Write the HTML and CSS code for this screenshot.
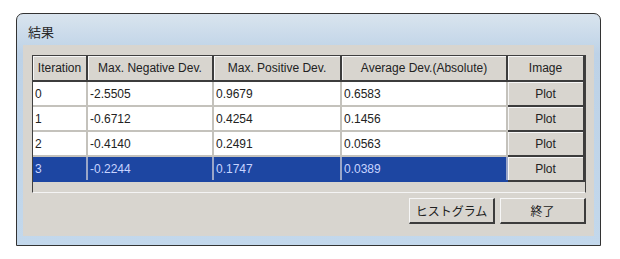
FILE: index.html
```html
<html>

<head>
    <link rel="stylesheet" href="styles.css">
</head>

<body>
    <div class="window">
        <div class="titlebar"><span class="title">結果</span></div>
        <div class="client">
            <div class="listview">
                <table>
                    <colgroup>
                        <col class="c1">
                        <col class="c2">
                        <col class="c3">
                        <col class="c4">
                        <col class="c5">
                    </colgroup>
                    <thead>
                        <tr>
                            <th>Iteration</th>
                            <th>Max. Negative Dev.</th>
                            <th>Max. Positive Dev.</th>
                            <th>Average Dev.(Absolute)</th>
                            <th>Image</th>
                        </tr>
                    </thead>
                    <tbody>
                        <tr>
                            <td>0</td>
                            <td>-2.5505</td>
                            <td>0.9679</td>
                            <td>0.6583</td>
                            <td class="plot">Plot</td>
                        </tr>
                        <tr>
                            <td>1</td>
                            <td>-0.6712</td>
                            <td>0.4254</td>
                            <td>0.1456</td>
                            <td class="plot">Plot</td>
                        </tr>
                        <tr>
                            <td>2</td>
                            <td>-0.4140</td>
                            <td>0.2491</td>
                            <td>0.0563</td>
                            <td class="plot">Plot</td>
                        </tr>
                        <tr class="selected">
                            <td>3</td>
                            <td>-0.2244</td>
                            <td>0.1747</td>
                            <td>0.0389</td>
                            <td class="plot">Plot</td>
                        </tr>
                    </tbody>
                </table>
            </div>
            <div class="buttons">
                <button class="btn">ヒストグラム</button>
                <button class="btn">終了</button>
            </div>
        </div>
    </div>
</body>

</html>
```

FILE: styles.css
```css
* {
    box-sizing: border-box;
}

body {
    margin: 0;
    background-color: #ffffff;
    font-family: "Liberation Sans", "Noto Sans CJK JP", sans-serif;
    font-size: 12px;
    color: #1a1a1a;
}

.window {
    margin: 13px 0 0 16px;
    width: 585px;
    height: 233px;
    border: 1px solid #333333;
    border-radius: 7px 7px 0 0;
    padding: 0 6px 9px 6px;
    background: linear-gradient(to bottom, #d9e4ee 0px, #bdd2e7 40px, #c3d8ec 100%);
    display: flex;
    flex-direction: column;
}

.titlebar {
    height: 31px;
    display: flex;
    align-items: center;
    padding: 4px 0 0 5px;
}

.title {
    font-family: "Noto Sans CJK JP", sans-serif;
    font-size: 13px;
    color: #2a2a2a;
}

.client {
    flex: 1;
    background-color: #d8d5cf;
    padding: 10px 8px 0 9px;
    display: flex;
    flex-direction: column;
}

.listview {
    height: 138px;
    border-top: 1px solid #404040;
    border-left: 1px solid #404040;
    border-right: 1px solid #404040;
    border-bottom: 1px solid #f4f4f4;
    background-color: #d8d5cf;
}

table {
    border-collapse: collapse;
    table-layout: fixed;
    width: 551px;
    font-family: "Liberation Sans", sans-serif;
    font-size: 12px;
}

.c1 {
    width: 54px;
}

.c2 {
    width: 126px;
}

.c3 {
    width: 128px;
}

.c4 {
    width: 166px;
}

.c5 {
    width: 77px;
}

th {
    height: 25px;
    font-weight: normal;
    text-align: center;
    background-color: #d8d5cf;
    border-right: 2px solid #3c3c3c;
    border-bottom: 2px solid #3c3c3c;
    box-shadow: inset 1px 1px #f6f6f6;
    color: #222222;
    padding: 0;
    white-space: nowrap;
    overflow: hidden;
}

td {
    height: 25px;
    background-color: #ffffff;
    border-right: 2px solid #c4c2bc;
    border-bottom: 2px solid #c4c2bc;
    padding: 0 0 0 2px;
    white-space: nowrap;
    color: #222222;
}

td.plot {
    text-align: center;
    padding: 0;
    background-color: #d8d5cf;
    border-right: 2px solid #3c3c3c;
    border-bottom: 2px solid #3c3c3c;
    box-shadow: inset 1px 1px #f6f6f6;
}

.selected td {
    background-color: #1d46a2;
    color: #c8d4ff;
    border-right-color: #9aa6c8;
    border-bottom-color: #1d46a2;
}

.selected td.plot {
    background-color: #d8d5cf;
    color: #222222;
    border-right-color: #3c3c3c;
    border-bottom-color: #3c3c3c;
}

.buttons {
    display: flex;
    justify-content: flex-end;
    gap: 5px;
    margin-top: 5px;
}

.btn {
    width: 86px;
    height: 26px;
    font-family: "Noto Sans CJK JP", sans-serif;
    font-size: 12px;
    color: #222222;
    background-color: #d8d5cf;
    border-top: 1px solid #f6f6f6;
    border-left: 1px solid #f6f6f6;
    border-right: 2px solid #3c3c3c;
    border-bottom: 2px solid #3c3c3c;
    padding: 0;
}
```
